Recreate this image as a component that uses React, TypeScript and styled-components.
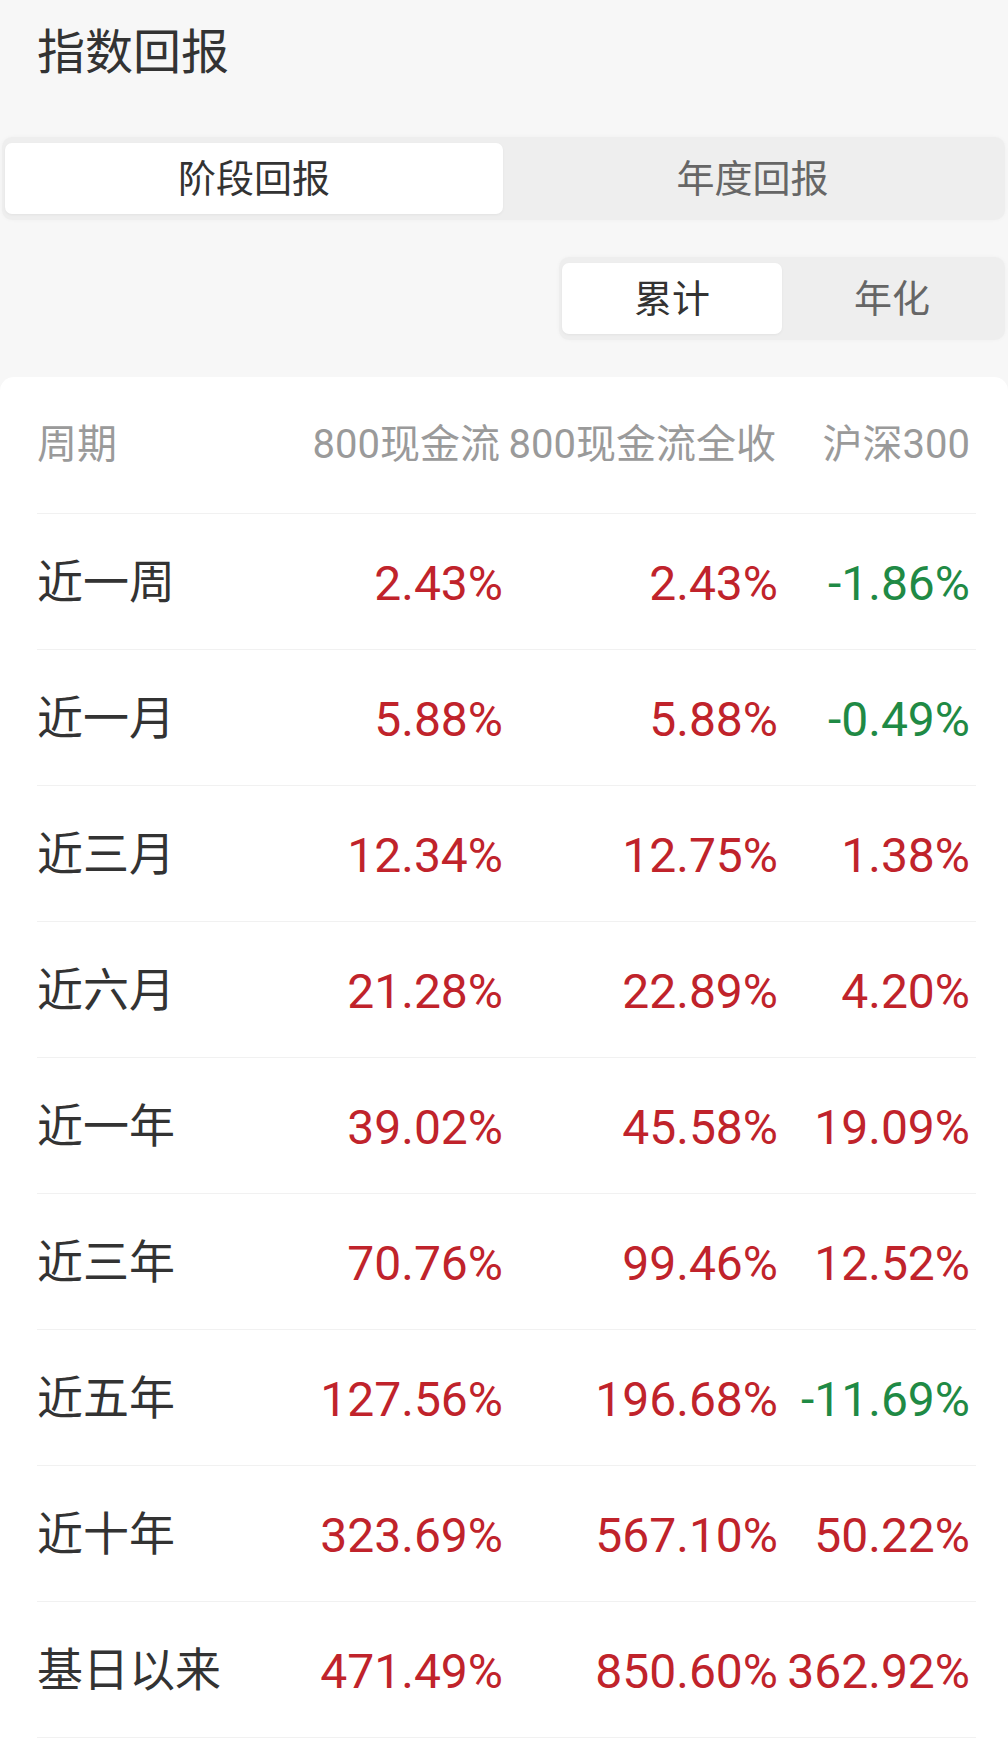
import React from "react";
import styled, { createGlobalStyle } from "styled-components";

const GlobalStyle = createGlobalStyle`
  html, body {
    margin: 0;
    padding: 0;
    background: #f7f7f7;
    font-family: Roboto, "Noto Sans CJK SC", sans-serif;
  }
  * { box-sizing: border-box; }
`;

const Page = styled.div`
  width: 1008px;
  min-height: 1749px;
  background: #f7f7f7;
  display: flex;
  flex-direction: column;
`;

const Header = styled.div`
  height: 137px;
  padding: 29px 0 0 37px;
`;

const Title = styled.h1`
  margin: 0;
  font-size: 48px;
  line-height: 1;
  font-weight: 400;
  color: #333;
`;

const TabBar = styled.div<{ $width?: string }>`
  display: flex;
  height: 83px;
  padding: 6px 3px;
  background: #eeeeee;
  border-radius: 10px;
  box-shadow: 0 0 4px rgba(0, 0, 0, 0.03);
  width: ${(p) => p.$width || "auto"};
`;

const MainTabs = styled(TabBar)`
  margin: 0 3px 0 2px;
`;

const SubRow = styled.div`
  display: flex;
  justify-content: flex-end;
  padding: 37px 3px 37px 0;
`;

const Tab = styled.div<{ $active?: boolean; $size: number }>`
  flex: ${(p) => (p.$active ? "0 0 auto" : "1")};
  display: flex;
  align-items: center;
  justify-content: center;
  border-radius: 7px;
  background: ${(p) => (p.$active ? "#ffffff" : "transparent")};
  box-shadow: ${(p) => (p.$active ? "0 1px 3px rgba(0,0,0,0.05)" : "none")};
  color: ${(p) => (p.$active ? "#333" : "#666")};
  font-size: ${(p) => p.$size}px;
  line-height: 1;
`;

const Card = styled.div`
  flex: 1;
  background: #fff;
  border-radius: 14px 14px 0 0;
  padding: 0 32px 0 37px;
`;

const Row = styled.div<{ $head?: boolean }>`
  display: grid;
  grid-template-columns: 1fr 243px 275px 192px;
  align-items: center;
  height: ${(p) => (p.$head ? "137px" : "136px")};
  padding-right: 6px;
  border-bottom: 1px solid #f1f1f1;
`;

const HeadCell = styled.div<{ $right?: boolean; $shift?: number }>`
  font-size: 40px;
  line-height: 1;
  color: #9a9a9a;
  text-align: ${(p) => (p.$right ? "right" : "left")};
  white-space: nowrap;
  margin-right: ${(p) => p.$shift || 0}px;
`;

const Label = styled.div`
  font-size: 46px;
  line-height: 1;
  color: #333;
  white-space: nowrap;
`;

const Value = styled.div<{ $neg?: boolean }>`
  font-family: Roboto, sans-serif;
  font-size: 48px;
  line-height: 1;
  padding-top: 4px;
  text-align: right;
  white-space: nowrap;
  color: ${(p) => (p.$neg ? "#1f8a45" : "#c0232b")};
`;

const rows: [string, string, string, string][] = [
  ["近一周", "2.43%", "2.43%", "-1.86%"],
  ["近一月", "5.88%", "5.88%", "-0.49%"],
  ["近三月", "12.34%", "12.75%", "1.38%"],
  ["近六月", "21.28%", "22.89%", "4.20%"],
  ["近一年", "39.02%", "45.58%", "19.09%"],
  ["近三年", "70.76%", "99.46%", "12.52%"],
  ["近五年", "127.56%", "196.68%", "-11.69%"],
  ["近十年", "323.69%", "567.10%", "50.22%"],
  ["基日以来", "471.49%", "850.60%", "362.92%"],
];

export default function App() {
  return (
    <Page>
      <GlobalStyle />
      <Header>
        <Title>指数回报</Title>
      </Header>
      <MainTabs>
        <Tab $active $size={38} style={{ width: 498 }}>
          阶段回报
        </Tab>
        <Tab $size={38}>年度回报</Tab>
      </MainTabs>
      <SubRow>
        <TabBar $width="446px">
          <Tab $active $size={38} style={{ width: 220 }}>
            累计
          </Tab>
          <Tab $size={38}>年化</Tab>
        </TabBar>
      </SubRow>
      <Card>
        <Row $head>
          <HeadCell>周期</HeadCell>
          <HeadCell $right $shift={3}>800现金流</HeadCell>
          <HeadCell $right $shift={2}>800现金流全收</HeadCell>
          <HeadCell $right>沪深300</HeadCell>
        </Row>
        {rows.map((r) => (
          <Row key={r[0]}>
            <Label>{r[0]}</Label>
            <Value $neg={r[1].startsWith("-")}>{r[1]}</Value>
            <Value $neg={r[2].startsWith("-")}>{r[2]}</Value>
            <Value $neg={r[3].startsWith("-")}>{r[3]}</Value>
          </Row>
        ))}
      </Card>
    </Page>
  );
}
